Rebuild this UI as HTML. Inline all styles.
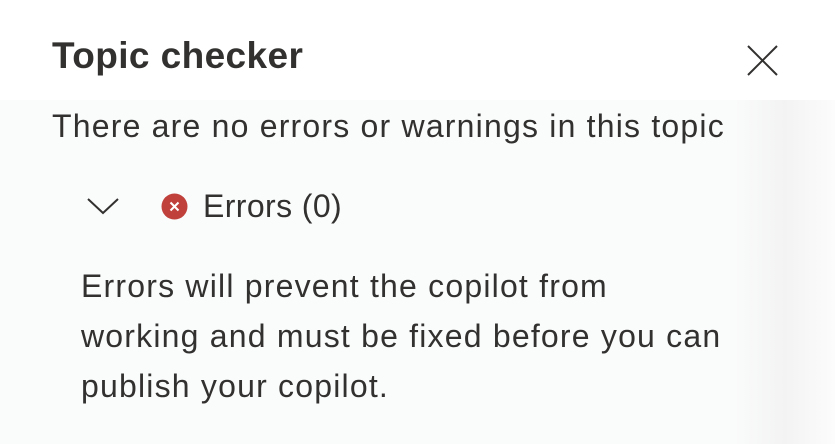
<!DOCTYPE html>
<html><head><meta charset="utf-8"><style>
html,body{margin:0;padding:0}
body{width:835px;height:444px;overflow:hidden;position:relative;background:#fff;font-family:"Liberation Sans",sans-serif;color:#323130}
.bg{position:absolute;left:0;top:100px;width:835px;height:344px;background:linear-gradient(90deg,#fafbfb 0%,#fafbfb 88%,#f3f3f3 94%,#fcfcfc 100%)}
.t{position:absolute;white-space:nowrap;line-height:1}
.b{font-size:32px;letter-spacing:1.2px}
</style></head><body>
<div class="bg"></div>
<div class="t" style="left:52px;top:37px;font-size:37px;font-weight:bold;letter-spacing:0.4px">Topic checker</div>
<svg style="position:absolute;left:746px;top:44px" width="33" height="33" viewBox="0 0 33 33"><path d="M2 2L31 31M31 2L2 31" stroke="#323130" stroke-width="2" fill="none"/></svg>
<div class="t b" style="left:52px;top:110px">There are no errors or warnings in this topic</div>
<svg style="position:absolute;left:86px;top:196px" width="34" height="20" viewBox="0 0 34 20"><path d="M2 3L17 17L32 3" stroke="#323130" stroke-width="2" fill="none"/></svg>
<svg style="position:absolute;left:161px;top:193px" width="27" height="27" viewBox="0 0 27 27"><circle cx="13.5" cy="13.5" r="13" fill="#c0413c"/><path d="M9.5 9.5L17.5 17.5M17.5 9.5L9.5 17.5" stroke="#fff" stroke-width="2"/></svg>
<div class="t" style="left:203px;top:190px;font-size:32px;letter-spacing:0.4px">Errors (0)</div>
<div class="t b" style="left:81px;top:270px">Errors will prevent the copilot from</div>
<div class="t b" style="left:81px;top:320px">working and must be fixed before you can</div>
<div class="t b" style="left:81px;top:370px">publish your copilot.</div>
</body></html>
